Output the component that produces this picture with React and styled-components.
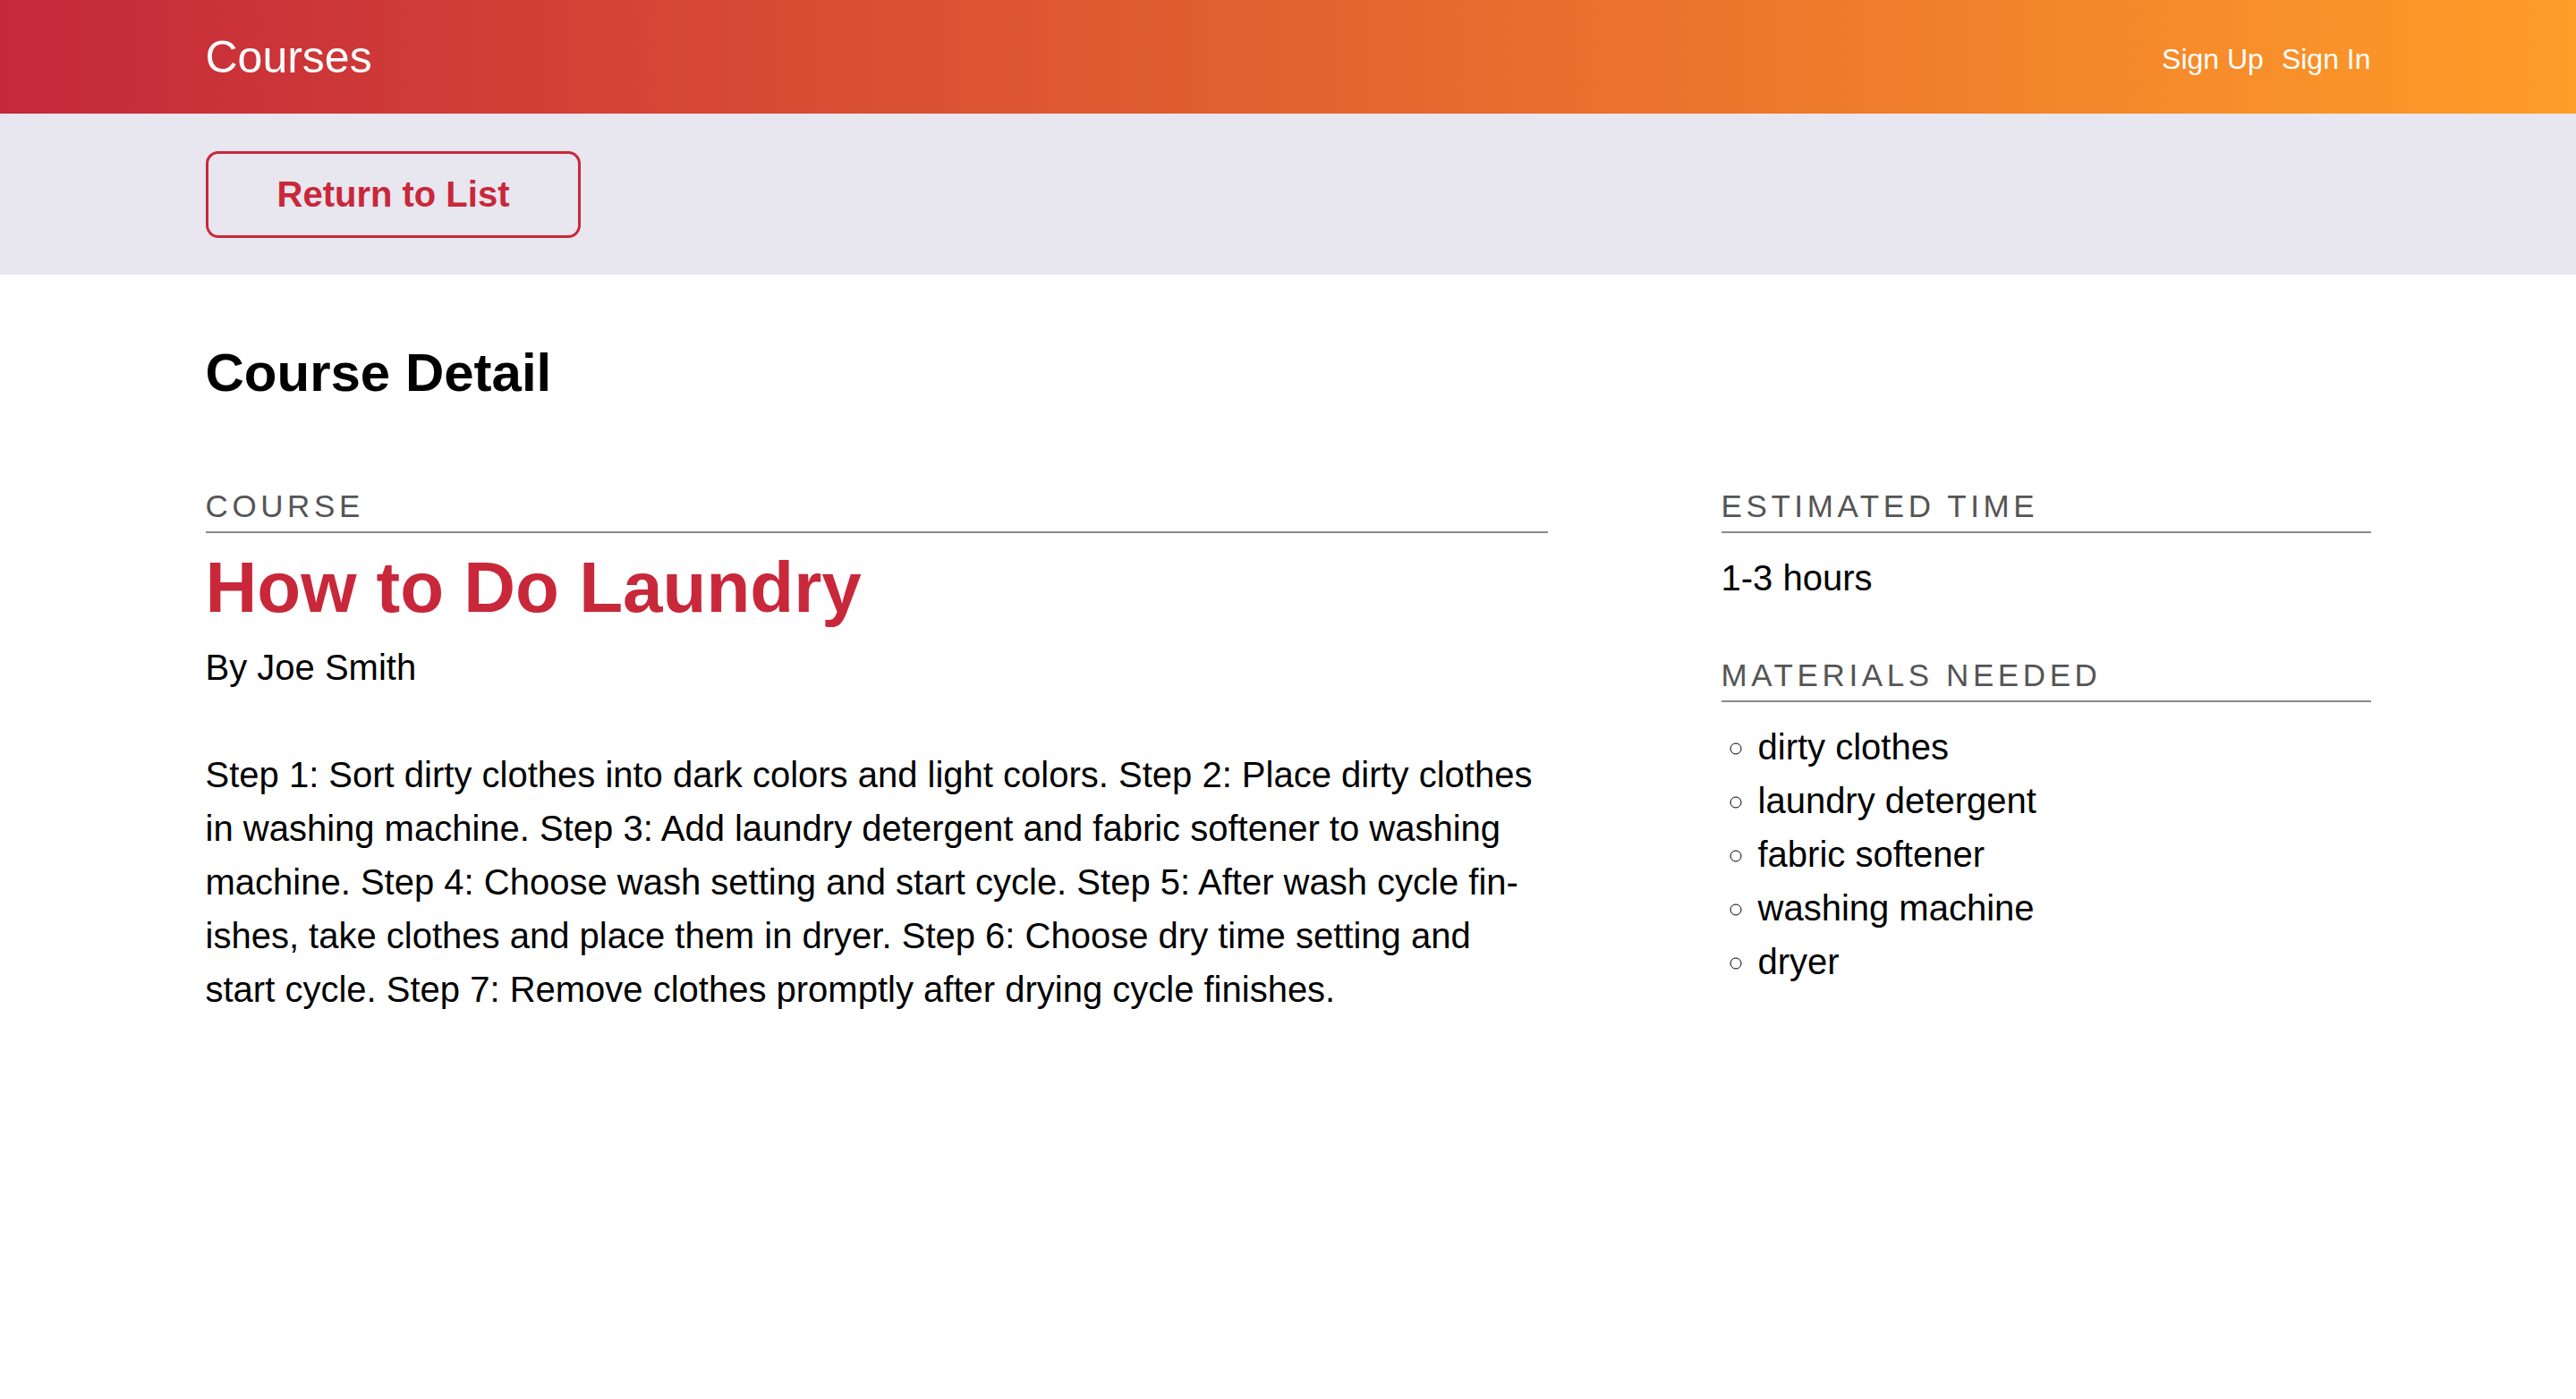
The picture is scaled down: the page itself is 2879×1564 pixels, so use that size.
import React from "react";
import styled, { createGlobalStyle } from "styled-components";

const GlobalStyle = createGlobalStyle`
  * {
    box-sizing: border-box;
  }

  body {
    margin: 0;
    background: #fff;
    color: #000;
    font-family: "Liberation Sans", Arial, Helvetica, sans-serif;
  }
`;

const Container = styled.div`
  width: 100%;
  max-width: 2420px;
  margin: 0 auto;
`;

const Header = styled.header`
  height: 127px;
  background: linear-gradient(90deg, #c5283b 0%, #e3622f 50%, #fe9d28 100%);
`;

const HeaderInner = styled(Container)`
  display: flex;
  align-items: center;
  justify-content: space-between;
  height: 100%;
`;

const Brand = styled.h1`
  margin: 0;
  font-size: 50px;
  font-weight: 400;
  line-height: 1;
  color: #fff;
`;

const Nav = styled.nav`
  display: flex;
  align-items: center;
  gap: 20px;
  padding-top: 5px;
`;

const NavLink = styled.a`
  font-size: 32px;
  color: #fff;
  text-decoration: none;
`;

const ActionBar = styled.div`
  background: #e8e6ef;
  padding: 42px 0 41px;
`;

const ReturnButton = styled.a`
  display: inline-flex;
  align-items: center;
  justify-content: center;
  height: 97px;
  padding: 0 77px;
  border: 3px solid #c8283a;
  border-radius: 14px;
  color: #c8283a;
  font-size: 40px;
  font-weight: 700;
  text-decoration: none;
`;

const Main = styled(Container)`
  padding: 74px 0 120px;
`;

const PageTitle = styled.h2`
  margin: 0 0 92px;
  font-size: 60px;
  font-weight: 700;
  line-height: 72px;
`;

const DetailGrid = styled.div`
  display: grid;
  grid-template-columns: 62% 30%;
  justify-content: space-between;
`;

const Section = styled.div`
  & + & {
    margin-top: 58px;
  }
`;

const Label = styled.h3`
  margin: 0;
  padding-bottom: 7px;
  border-bottom: 2px solid #8a8a8a;
  font-size: 35px;
  font-weight: 400;
  line-height: 42px;
  letter-spacing: 4.6px;
  text-transform: uppercase;
  color: #555;
`;

const CourseTitle = styled.h4`
  margin: 13px 0 0;
  font-size: 80px;
  font-weight: 700;
  line-height: 96px;
  color: #c8283a;
`;

const Text = styled.p`
  margin: ${props => props.$gap || 0}px 0 0;
  font-size: 40px;
  line-height: 60px;
`;

const Materials = styled.ul`
  margin: 20px 0 0;
  padding-left: 41px;
  list-style: circle;

  li {
    font-size: 40px;
    line-height: 60px;
  }
`;

const course = {
  title: "How to Do Laundry",
  author: "Joe Smith",
  description:
    "Step 1: Sort dirty clothes into dark colors and light colors. Step 2: Place dirty clothes in washing machine. Step 3: Add laundry detergent and fabric softener to washing machine. Step 4: Choose wash setting and start cycle. Step 5: After wash cycle fin\u00ADishes, take clothes and place them in dryer. Step 6: Choose dry time setting and start cycle. Step 7: Remove clothes promptly after drying cycle finishes.",
  estimatedTime: "1-3 hours",
  materials: [
    "dirty clothes",
    "laundry detergent",
    "fabric softener",
    "washing machine",
    "dryer"
  ]
};

const App = () => (
  <>
    <GlobalStyle />
    <Header>
      <HeaderInner>
        <Brand>Courses</Brand>
        <Nav>
          <NavLink href="#">Sign Up</NavLink>
          <NavLink href="#">Sign In</NavLink>
        </Nav>
      </HeaderInner>
    </Header>

    <ActionBar>
      <Container>
        <ReturnButton href="#">Return to List</ReturnButton>
      </Container>
    </ActionBar>

    <Main>
      <PageTitle>Course Detail</PageTitle>
      <DetailGrid>
        <div>
          <Label>Course</Label>
          <CourseTitle>{course.title}</CourseTitle>
          <Text $gap={11}>By {course.author}</Text>
          <Text $gap={60}>{course.description}</Text>
        </div>

        <div>
          <Section>
            <Label>Estimated Time</Label>
            <Text $gap={20}>{course.estimatedTime}</Text>
          </Section>
          <Section>
            <Label>Materials Needed</Label>
            <Materials>
              {course.materials.map(item => (
                <li key={item}>{item}</li>
              ))}
            </Materials>
          </Section>
        </div>
      </DetailGrid>
    </Main>
  </>
);

export default App;
